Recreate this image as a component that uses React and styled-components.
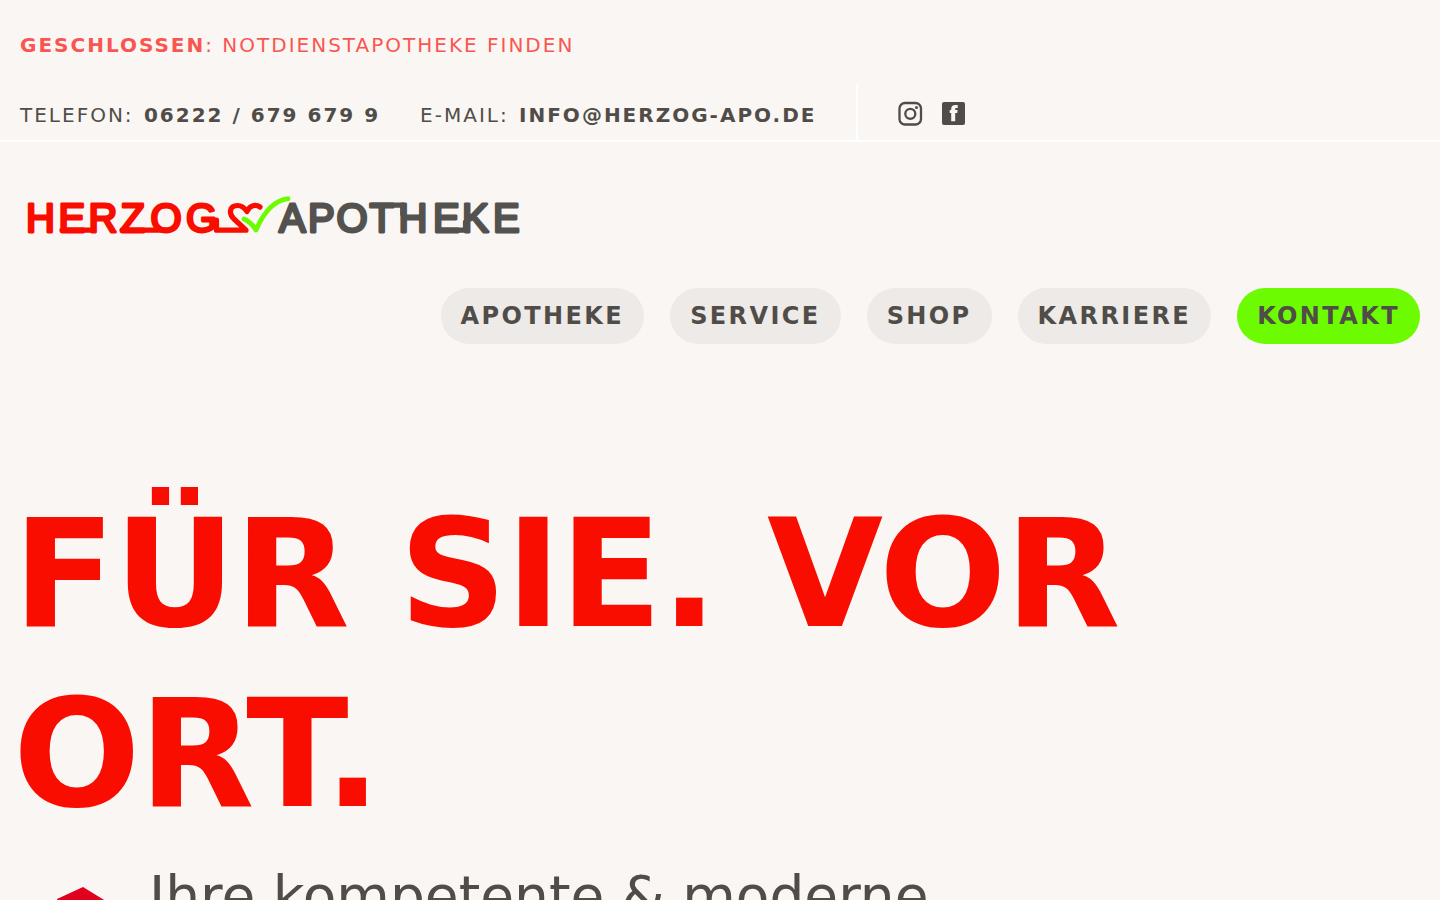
import React from "react";
import styled, { createGlobalStyle } from "styled-components";

const GlobalStyle = createGlobalStyle`
  *, *::before, *::after { box-sizing: border-box; }
  body {
    margin: 0;
    background: #faf6f3;
    color: #504d49;
    font-family: "DejaVu Sans", sans-serif;
  }
  a { color: inherit; text-decoration: none; }
`;

const TopBar = styled.div`
  border-bottom: 2px solid #fff;
  font-size: 20px;
  line-height: 30px;
  letter-spacing: 0.1em;
  text-transform: uppercase;
`;

const Notice = styled.p`
  margin: 0;
  padding: 30px 20px 24px;
  color: #f95651;
`;

const ContactRow = styled.div`
  display: flex;
  min-height: 56px;
  padding-left: 20px;
`;

const Contact = styled.p`
  margin: 0;
  padding-top: 16px;
  margin-right: 40px;
  a { margin-left: 2px; }
`;

const Social = styled.div`
  display: flex;
  align-items: center;
  gap: 18px;
  padding: 4px 40px 0;
  border-left: 2px solid #fff;
`;

const SocialLink = styled.a`
  display: block;
  width: 26px;
  height: 26px;
  svg { display: block; }
`;

const Header = styled.header`
  padding: 48px 20px 0;
`;

const LogoLink = styled.a`
  display: block;
  width: 504px;
  svg { display: block; }
`;

const Nav = styled.nav`
  display: flex;
  justify-content: flex-end;
  gap: 26px;
  margin-top: 50px;
`;

const NavLink = styled.a`
  padding: 0 20px;
  border-radius: 28px;
  background: ${(p) => (p.$active ? "#6cfb00" : "#eeeae7")};
  font-size: 24px;
  font-weight: 700;
  line-height: 56px;
  letter-spacing: 0.1em;
  text-transform: uppercase;
`;

const Hero = styled.main`
  padding: 140px 20px 40px;
`;

const Title = styled.h1`
  margin: 0 0 0 -7px;
  color: #f90d00;
  font-size: 150px;
  font-weight: 700;
  line-height: 180px;
  letter-spacing: -0.01em;
  text-transform: uppercase;
`;

const Intro = styled.div`
  display: flex;
  gap: 4px;
  margin-top: 12px;
`;

const Emblem = styled.svg`
  flex: none;
  width: 126px;
  height: 100px;
  margin-top: 31px;
`;

const Lead = styled.p`
  margin: 0 0 0 -1px;
  max-width: 860px;
  font-size: 55px;
  line-height: 80px;
`;

const navItems = ["Apotheke", "Service", "Shop", "Karriere", "Kontakt"];

function Logo() {
  return (
    <svg width="504" height="48" viewBox="20 190 504 48" role="img" aria-label="Herzog Apotheke">
      <g
        fontFamily="Liberation Sans, Arial, sans-serif"
        fontSize="40"
        strokeWidth="2.800"
        strokeLinejoin="round"
      >
        <text y="231.500" x="26 58.500 88.500 120.500 150.500 186" fill="#f90d00" stroke="#f90d00">HERZOG</text>
        <text y="231.500" x="279 308 336.500 369.500 398.500 433 462 493" fill="#54524f" stroke="#54524f">APOTHEKE</text>
      </g>
      <g fill="none" strokeLinecap="round" strokeLinejoin="round">
        <path d="M62 230.200H92M122 230.200H167M216.500 220V230.200H246L234 219C228 213 230 205.500 237.500 205.500C242.500 205.500 245 208.500 247 211.500C249.500 206 255 203.500 260 207" stroke="#f90d00" strokeWidth="5.200" />
        <path d="M372 205.200H402.800V214M438 230.200H465.500V222" stroke="#54524f" strokeWidth="5.200" />
        <path d="M244 219Q251 222 256 230C263 214 273 200.500 288 198.700" stroke="#6cfb00" strokeWidth="4.800" />
      </g>
    </svg>
  );
}

export default function App() {
  return (
    <>
      <GlobalStyle />
      <TopBar>
        <Notice>
          <a href="#notdienst"><strong>Geschlossen</strong>: Notdienstapotheke finden</a>
        </Notice>
        <ContactRow>
          <Contact>Telefon: <a href="tel:+4962226796799"><strong>06222 / 679 679 9</strong></a></Contact>
          <Contact>E-Mail: <a href="mailto:info@herzog-apo.de"><strong>info@herzog-apo.de</strong></a></Contact>
          <Social>
            <SocialLink href="#instagram" aria-label="Instagram">
              <svg width="26" height="26" viewBox="0 0 26 26" fill="none" stroke="#504d49" strokeWidth="2.300">
                <rect x="1.500" y="2" width="21.500" height="21.500" rx="5.500" />
                <circle cx="12.300" cy="12.800" r="5" />
                <circle cx="18.500" cy="6.600" r="1.500" fill="#504d49" stroke="none" />
              </svg>
            </SocialLink>
            <SocialLink href="#facebook" aria-label="Facebook">
              <svg width="26" height="26" viewBox="0 0 26 26">
                <rect x="0" y="1" width="23" height="23" rx="2" fill="#504d49" />
                <path d="M9.200 20.300V12H7.700V9H9.200V8C9.200 5 10.800 4 13.200 4H15.700V7H14.300C13.500 7 13.200 7.400 13.200 8.200V9H15.600L15.200 12H13.200V20.300Z" fill="#faf6f3" />
              </svg>
            </SocialLink>
          </Social>
        </ContactRow>
      </TopBar>
      <Header>
        <LogoLink href="#start"><Logo /></LogoLink>
        <Nav>
          {navItems.map((item) => (
            <NavLink key={item} href={"#" + item.toLowerCase()} $active={item === "Kontakt"}>{item}</NavLink>
          ))}
        </Nav>
      </Header>
      <Hero>
        <Title>Für Sie. Vor Ort.</Title>
        <Intro>
          <Emblem viewBox="0 0 126 100" aria-hidden="true">
            <path d="M63 0L37 12V70L63 86L89 70V16Z" fill="#e1001e" />
          </Emblem>
          <Lead>Ihre kompetente &amp; moderne</Lead>
        </Intro>
      </Hero>
    </>
  );
}
